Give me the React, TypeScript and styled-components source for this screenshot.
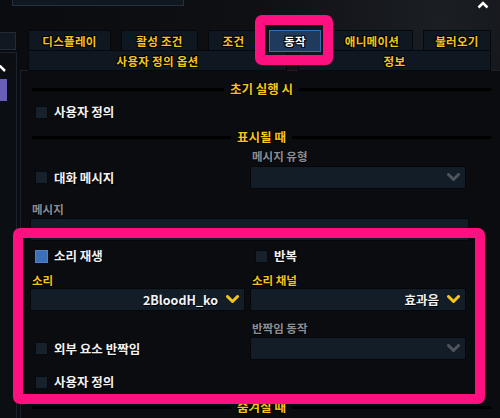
import React from "react"
import styled, { createGlobalStyle } from "styled-components"

const GlobalStyle = createGlobalStyle`
  html, body {
    margin: 0;
    padding: 0;
    background: #0a0c10;
  }
  body {
    font-family: "Noto Sans CJK KR", "Noto Sans", sans-serif;
    font-weight: 700;
  }
`

const yellow = "#f5c518"
const outline =
  "1px 1px 0 #000, -1px -1px 0 #000, 1px -1px 0 #000, -1px 1px 0 #000"

const Page = styled.div`
  position: relative;
  width: 500px;
  height: 418px;
  overflow: hidden;
  display: flex;
  flex-direction: column;
  background: radial-gradient(
    ellipse at 88% 4%,
    #1b1e23 0%,
    #0e1014 30%,
    #0a0c10 65%
  );
`

const TopBar = styled.div`
  height: 30px;
  flex-shrink: 0;
  display: flex;
  justify-content: space-between;
  align-items: flex-start;
`

const TopBox = styled.div`
  box-sizing: border-box;
  margin-left: 12px;
  margin-top: -10px;
  width: 172px;
  height: 16px;
  background: #0f1720;
  border: 1px solid #27313d;
`

const TopChevron = styled.svg`
  margin-right: 11px;
  margin-top: 1px;
`

const Body = styled.div`
  flex: 1;
  display: flex;
  gap: 3px;
  min-height: 0;
`

const Sidebar = styled.div`
  width: 17px;
  flex-shrink: 0;
  display: flex;
  flex-direction: column;
`

const SideTab = styled.div`
  box-sizing: border-box;
  margin-top: 2px;
  width: 16px;
  height: 18px;
  background: #101822;
  border: 1px solid #222b36;
  border-left: none;
`

const SidePanel = styled.div`
  flex: 1;
  margin-top: 2px;
  padding-top: 12px;
  background: #0b0e13;
  border-top: 1px solid #1c222b;
  border-right: 1px solid #1c222b;
  display: flex;
  flex-direction: column;
`

const SideChevron = styled.svg`
  margin-left: -6px;
`

const SideBlock = styled.div`
  margin-top: 7px;
  width: 7px;
  height: 22px;
  background: #6a5fb6;
`

const Main = styled.div`
  flex: 1;
  display: flex;
  flex-direction: column;
  min-width: 0;
`

const TabRow = styled.div<{ $gap: number }>`
  display: flex;
  align-items: flex-start;
  gap: ${({ $gap }) => $gap}px;
  padding-left: 8px;
  height: 21px;
  & + & {
    margin-top: -1px;
  }
`

const Tab = styled.div<{ $w: number; $active?: boolean }>`
  box-sizing: border-box;
  width: ${({ $w }) => $w}px;
  height: ${({ $active }) => ($active ? 22 : 21)}px;
  display: flex;
  align-items: center;
  justify-content: center;
  font-size: 11.5px;
  line-height: 12px;
  letter-spacing: 0.3px;
  position: relative;
  z-index: ${({ $active }) => ($active ? 1 : 0)};
  color: ${({ $active }) => ($active ? "#ffffff" : yellow)};
  background: ${({ $active }) => ($active ? "#1f3a5b" : "#0f1720")};
  border: 1px solid ${({ $active }) => ($active ? "#3c6db2" : "#05080c")};
  text-shadow: ${outline};
`

const Panel = styled.div`
  flex: 1;
  margin-top: -1px;
  padding: 11px 0 0 9px;
  background: #0a0c10;
  border-top: 1px solid #1c2129;
  border-left: 1px solid #1c2129;
`

const Header = styled.div<{ $mt: number }>`
  margin-top: ${({ $mt }) => $mt}px;
  margin-left: 2px;
  width: 459px;
  height: 14px;
  display: flex;
  align-items: center;
  gap: 6px;
  font-size: 12.5px;
  line-height: 14px;
  color: ${yellow};
  text-shadow: ${outline};
  white-space: nowrap;
`

const Line = styled.div`
  flex: 1;
  height: 3px;
  background: #000;
`

const Row = styled.div<{ $mt: number }>`
  margin-top: ${({ $mt }) => $mt}px;
  display: grid;
  grid-template-columns: 215px 216px;
  column-gap: 5px;
  align-items: center;
`

const Wide = styled.div<{ $mt: number }>`
  margin-top: ${({ $mt }) => $mt}px;
`

const CheckItem = styled.div`
  margin-left: 5px;
  height: 14px;
  display: flex;
  align-items: center;
  gap: 6px;
  font-size: 12.5px;
  line-height: 14px;
  color: #f2f2f2;
  text-shadow: 1px 1px 0 #000;
  white-space: nowrap;
`

const Box = styled.div<{ $checked?: boolean }>`
  box-sizing: border-box;
  width: 13px;
  height: 13px;
  flex-shrink: 0;
  background: ${({ $checked }) => ($checked ? "#3b6fba" : "#16212c")};
  border: 1px solid ${({ $checked }) => ($checked ? "#4f82c8" : "#06090d")};
`

const Label = styled.div<{ $accent?: boolean }>`
  padding-left: 2px;
  height: 14px;
  font-size: 11.5px;
  line-height: 14px;
  color: ${({ $accent }) => ($accent ? yellow : "#8b8f95")};
  text-shadow: ${({ $accent }) => ($accent ? outline : "1px 1px 0 #000")};
  white-space: nowrap;
`

const Select = styled.div`
  box-sizing: border-box;
  height: 23px;
  display: flex;
  align-items: center;
  justify-content: flex-end;
  gap: 8px;
  padding-right: 5px;
  background: #131d27;
  border: 1px solid #05070a;
  font-size: 12.5px;
  line-height: 14px;
  color: #f2f2f2;
  text-shadow: 1px 1px 0 #000;
`

const TextInput = styled.div`
  box-sizing: border-box;
  width: 439px;
  height: 23px;
  background: #131d27;
  border: 1px solid #05070a;
`

const Highlight = styled.div<{ $x: number; $y: number; $w: number; $h: number }>`
  position: absolute;
  box-sizing: border-box;
  left: ${({ $x }) => $x}px;
  top: ${({ $y }) => $y}px;
  width: ${({ $w }) => $w}px;
  height: ${({ $h }) => $h}px;
  border: 10px solid #ff1080;
  border-radius: 7px;
  pointer-events: none;
`

const Chevron = ({ disabled }: { disabled?: boolean }) => (
  <svg width="13" height="9" viewBox="0 0 13 9">
    <polyline
      points="1.5,1.5 6.5,6.5 11.5,1.5"
      fill="none"
      stroke={disabled ? "#4f545a" : "#f5c518"}
      strokeWidth="3"
      strokeLinecap="round"
      strokeLinejoin="round"
    />
  </svg>
)

const Check = ({ label, checked }: { label: string; checked?: boolean }) => (
  <CheckItem>
    <Box $checked={checked} />
    {label}
  </CheckItem>
)

const App = () => {
  return (
    <Page>
      <GlobalStyle />
      <TopBar>
        <TopBox />
        <TopChevron width="12" height="8" viewBox="0 0 12 8">
          <polyline
            points="1.5,6.5 6,2 10.5,6.5"
            fill="none"
            stroke="#ffffff"
            strokeWidth="2.5"
          />
        </TopChevron>
      </TopBar>
      <Body>
        <Sidebar>
          <SideTab />
          <SidePanel>
            <SideChevron width="12" height="7" viewBox="0 0 12 7">
              <polyline
                points="1,6 6,1 11,6"
                fill="none"
                stroke="#ffffff"
                strokeWidth="2.5"
              />
            </SideChevron>
            <SideBlock />
          </SidePanel>
        </Sidebar>
        <Main>
          <TabRow $gap={10}>
            <Tab $w={83}>디스플레이</Tab>
            <Tab $w={77}>활성 조건</Tab>
            <Tab $w={51}>조건</Tab>
            <Tab $w={52} $active>
              동작
            </Tab>
            <Tab $w={82}>애니메이션</Tab>
            <Tab $w={68}>불러오기</Tab>
          </TabRow>
          <TabRow $gap={11}>
            <Tab $w={259}>사용자 정의 옵션</Tab>
            <Tab $w={193}>정보</Tab>
          </TabRow>
          <Panel>
            <Header $mt={0}>
              <Line />
              초기 실행 시
              <Line />
            </Header>
            <Wide $mt={9}>
              <Check label="사용자 정의" />
            </Wide>
            <Header $mt={11}>
              <Line />
              표시될 때
              <Line />
            </Header>
            <Row $mt={5}>
              <div />
              <Label>메시지 유형</Label>
            </Row>
            <Row $mt={3}>
              <Check label="대화 메시지" />
              <Select>
                <Chevron disabled />
              </Select>
            </Row>
            <Wide $mt={13}>
              <Label>메시지</Label>
            </Wide>
            <Wide $mt={2}>
              <TextInput />
            </Wide>
            <Row $mt={8}>
              <Check label="소리 재생" checked />
              <Check label="반복" />
            </Row>
            <Row $mt={10}>
              <Label $accent>소리</Label>
              <Label $accent>소리 채널</Label>
            </Row>
            <Row $mt={1}>
              <Select>
                2BloodH_ko
                <Chevron />
              </Select>
              <Select>
                효과음
                <Chevron />
              </Select>
            </Row>
            <Row $mt={10}>
              <div />
              <Label>반짝임 동작</Label>
            </Row>
            <Row $mt={2}>
              <Check label="외부 요소 반짝임" />
              <Select>
                <Chevron disabled />
              </Select>
            </Row>
            <Wide $mt={15}>
              <Check label="사용자 정의" />
            </Wide>
            <Header $mt={11}>
              <Line />
              숨겨질 때
              <Line />
            </Header>
          </Panel>
        </Main>
      </Body>
      <Highlight $x={255} $y={15} $w={78} $h={50} />
      <Highlight $x={13} $y={228} $w={472} $h={176} />
    </Page>
  )
}

export default App
